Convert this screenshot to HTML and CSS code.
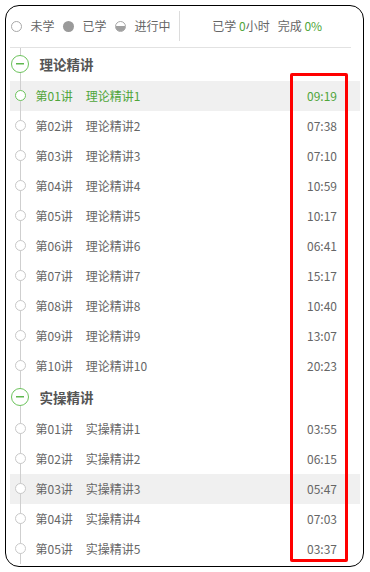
FILE: index.html
```html
<!DOCTYPE html>
<html lang="zh">
<head>
<meta charset="utf-8">
<title>课程目录</title>
<link rel="stylesheet" href="styles.css">
</head>
<body>
<div class="frame">
  <div class="top">
    <div class="legend">
      <span class="dot dot-empty"></span><span class="legend-text">未学</span>
      <span class="dot dot-full"></span><span class="legend-text">已学</span>
      <span class="dot dot-half"></span><span class="legend-text">进行中</span>
    </div>
    <div class="divider"></div>
    <div class="stats">已学 <span class="green">0</span>小时<span class="gap"></span>完成 <span class="green">0%</span></div>
  </div>
  <div class="list">
    <div class="section">
      <div class="marker"><span class="sec-dot"></span></div>
      <span class="sec-title">理论精讲</span>
    </div>
    <div class="row active"><div class="marker"><span class="row-dot"></span></div><span class="num">第01讲</span><span class="title">理论精讲1</span><span class="time">09:19</span></div>
    <div class="row"><div class="marker"><span class="row-dot"></span></div><span class="num">第02讲</span><span class="title">理论精讲2</span><span class="time">07:38</span></div>
    <div class="row"><div class="marker"><span class="row-dot"></span></div><span class="num">第03讲</span><span class="title">理论精讲3</span><span class="time">07:10</span></div>
    <div class="row"><div class="marker"><span class="row-dot"></span></div><span class="num">第04讲</span><span class="title">理论精讲4</span><span class="time">10:59</span></div>
    <div class="row"><div class="marker"><span class="row-dot"></span></div><span class="num">第05讲</span><span class="title">理论精讲5</span><span class="time">10:17</span></div>
    <div class="row"><div class="marker"><span class="row-dot"></span></div><span class="num">第06讲</span><span class="title">理论精讲6</span><span class="time">06:41</span></div>
    <div class="row"><div class="marker"><span class="row-dot"></span></div><span class="num">第07讲</span><span class="title">理论精讲7</span><span class="time">15:17</span></div>
    <div class="row"><div class="marker"><span class="row-dot"></span></div><span class="num">第08讲</span><span class="title">理论精讲8</span><span class="time">10:40</span></div>
    <div class="row"><div class="marker"><span class="row-dot"></span></div><span class="num">第09讲</span><span class="title">理论精讲9</span><span class="time">13:07</span></div>
    <div class="row"><div class="marker"><span class="row-dot"></span></div><span class="num">第10讲</span><span class="title">理论精讲10</span><span class="time">20:23</span></div>
    <div class="section">
      <div class="marker"><span class="sec-dot"></span></div>
      <span class="sec-title">实操精讲</span>
    </div>
    <div class="row"><div class="marker"><span class="row-dot"></span></div><span class="num">第01讲</span><span class="title">实操精讲1</span><span class="time">03:55</span></div>
    <div class="row"><div class="marker"><span class="row-dot"></span></div><span class="num">第02讲</span><span class="title">实操精讲2</span><span class="time">06:15</span></div>
    <div class="row hover"><div class="marker"><span class="row-dot"></span></div><span class="num">第03讲</span><span class="title">实操精讲3</span><span class="time">05:47</span></div>
    <div class="row"><div class="marker"><span class="row-dot"></span></div><span class="num">第04讲</span><span class="title">实操精讲4</span><span class="time">07:03</span></div>
    <div class="row"><div class="marker"><span class="row-dot"></span></div><span class="num">第05讲</span><span class="title">实操精讲5</span><span class="time">03:37</span></div>
  </div>
</div>
<div class="annotation"></div>
</body>
</html>
```
FILE: styles.css
```css
html, body {
  margin: 0;
  padding: 0;
  background: #fff;
}
body {
  font-family: "Noto Sans CJK SC", "Noto Sans", sans-serif;
  font-size: 12px;
  color: #666;
  width: 370px;
  height: 572px;
  position: relative;
  overflow: hidden;
}
.frame {
  box-sizing: border-box;
  margin: 5px 6px 0 5px;
  width: 359px;
  height: 562px;
  border: 1.5px solid #000;
  border-radius: 14px;
  padding: 0 3px 0 3.5px;
  overflow: hidden;
  background: #fff;
}
.top {
  height: 40.5px;
  display: flex;
  align-items: center;
  border-bottom: 1px solid #e2e2e2;
  margin-right: 9px;
}
.legend {
  display: flex;
  align-items: center;
  padding-left: 1px;
}
.dot {
  box-sizing: border-box;
  width: 11px;
  height: 11px;
  border-radius: 50%;
  margin-right: 9px;
}
.dot-empty {
  border: 1px solid #a8a8a8;
  background: #fff;
}
.dot-full {
  background: #9a9a9a;
}
.dot-half {
  border: 1px solid #a8a8a8;
  background: linear-gradient(#fff 0, #fff 50%, #a0a0a0 50%, #a0a0a0 100%);
}
.legend-text {
  line-height: 16px;
  margin-right: 8px;
}
.legend-text:last-child {
  margin-right: 0;
}
.divider {
  width: 1px;
  height: 30px;
  background: #dcdcdc;
  margin-left: 8px;
}
.stats {
  flex: 1;
  text-align: center;
  padding-left: 4px;
  line-height: 16px;
  white-space: pre;
}
.green {
  color: #4fa53a;
}
.gap {
  display: inline-block;
  width: 8px;
}
.list {
  display: flex;
  flex-direction: column;
}
.marker {
  width: 21px;
  align-self: stretch;
  display: flex;
  align-items: center;
  justify-content: center;
  background: linear-gradient(#cfcfcf, #cfcfcf) center / 1px 100% no-repeat;
  flex: none;
}
.section {
  height: 33px;
  display: flex;
  align-items: center;
}
.sec-dot {
  box-sizing: border-box;
  width: 18px;
  height: 18px;
  border-radius: 50%;
  border: 1.5px solid #6cc35c;
  background: #fff linear-gradient(#5fb84f, #5fb84f) center / 8px 1.5px no-repeat;
}
.sec-title {
  margin-left: 9px;
  font-size: 13.5px;
  font-weight: bold;
  color: #555;
  line-height: 18px;
}
.row {
  height: 30px;
  display: flex;
  align-items: center;
  padding-right: 23px;
}
.row.active,
.row.hover {
  background: #f0f0f0;
}
.row-dot {
  box-sizing: border-box;
  width: 11px;
  height: 11px;
  border-radius: 50%;
  border: 1px solid #c8c8c8;
  background: #fff;
}
.row.active .row-dot {
  border-color: #6cc35c;
}
.num {
  margin-left: 5px;
  margin-right: 13px;
  line-height: 16px;
}
.title {
  line-height: 16px;
}
.time {
  margin-left: auto;
  line-height: 16px;
}
.row.active .num,
.row.active .title,
.row.active .time {
  color: #4fa53a;
}
.annotation {
  position: absolute;
  left: 290px;
  top: 73px;
  width: 58px;
  height: 489px;
  box-sizing: border-box;
  border: 3px solid #f00;
  border-radius: 2px;
}
```
